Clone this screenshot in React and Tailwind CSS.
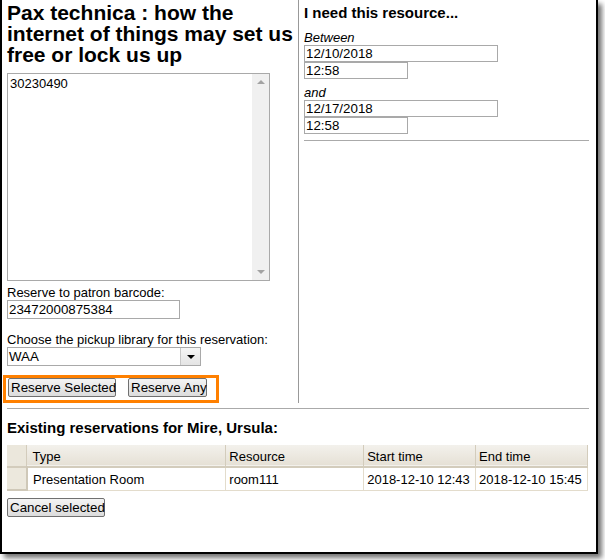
import React from "react";

const inputCls =
  "block border border-[#a9a9a9] bg-white px-[1px] text-[13.33px] leading-[15px] text-black";

const btnCls =
  "block h-[19px] whitespace-nowrap border border-[#707070] rounded-[2px] bg-gradient-to-b from-[#f4f4f4] to-[#dcdcdc] px-[2px] text-[13.33px] leading-[16px] text-black";

function Listbox() {
  return (
    <div className="mt-[8px] flex w-[263px] h-[208px] border border-[#a9a9a9] bg-white">
      <div className="flex-1 pl-[2px] pt-[2px] text-[13px] leading-[15px]">30230490</div>
      <div className="flex w-[17px] flex-col justify-between bg-[#f0f0f0] py-[6px]">
        <span className="mx-auto block h-0 w-0 border-x-[4px] border-b-[4px] border-x-transparent border-b-[#a3a3a3]" />
        <span className="mx-auto block h-0 w-0 border-x-[4px] border-t-[4px] border-x-transparent border-t-[#a3a3a3]" />
      </div>
    </div>
  );
}

function Select() {
  return (
    <div className="flex w-[194px] h-[19px] border border-[#a9a9a9] bg-white">
      <div className="flex-1 pl-[1px] text-[13.33px] leading-[17px]">WAA</div>
      <div className="flex w-[20px] items-center justify-center border-l border-[#c8c8c8] bg-gradient-to-b from-[#f6f6f6] to-[#e4e4e4]">
        <span className="block h-0 w-0 border-x-[4px] border-t-[4px] border-x-transparent border-t-black" />
      </div>
    </div>
  );
}

export default function App() {
  const rows = [
    { type: "Presentation Room", resource: "room111", start: "2018-12-10 12:43", end: "2018-12-10 15:45" },
  ];

  return (
    <div className="w-[605px] h-[560px] bg-white font-['Liberation_Sans',Arial,sans-serif] text-black">
      <div className="flex flex-col w-[598px] h-[554px] border-x-2 border-b-2 border-black bg-white shadow-[4px_4px_5px_rgba(0,0,0,0.55)]">
        <div className="flex pl-[5px] pr-[7px]">
          {/* left column */}
          <div className="w-[292px] border-r border-[#999] pt-[2px]">
            <h2 className="text-[21px] leading-[21px] font-bold">
              Pax technica : how the internet of things may set us free or lock us up
            </h2>
            <Listbox />
            <p className="mt-[4px] text-[13px] leading-[15px]">Reserve to patron barcode:</p>
            <div className={`${inputCls} w-[173px] h-[19px] leading-[17px]`}>23472000875384</div>
            <p className="mt-[13px] text-[13px] leading-[15px]">Choose the pickup library for this reservation:</p>
            <Select />
            <div className="mt-[9px] -ml-[4px] flex h-[28px] w-[216px] items-start gap-[12px] border-[3px] border-[#ff8000] pl-[2px]">
              <button className={`${btnCls} w-[108px]`}>Reserve Selected</button>
              <button className={`${btnCls} w-[79px]`}>Reserve Any</button>
            </div>
          </div>

          {/* right column */}
          <div className="flex-1 pl-[5px] pt-[4px]">
            <h3 className="text-[15px] leading-[17px] font-bold">I need this resource...</h3>
            <p className="mt-[9px] text-[13px] leading-[15px] italic">Between</p>
            <div className={`${inputCls} w-[194px] h-[17px]`}>12/10/2018</div>
            <div className={`${inputCls} w-[104px] h-[17px]`}>12:58</div>
            <p className="mt-[6px] text-[13px] leading-[15px] italic">and</p>
            <div className={`${inputCls} w-[194px] h-[17px]`}>12/17/2018</div>
            <div className={`${inputCls} w-[104px] h-[17px]`}>12:58</div>
            <div className="mt-[6px] border-t border-[#aaa]" />
          </div>
        </div>

        <div className="px-[5px] pr-[7px]">
          <div className="mt-[5px] border-t border-[#aaa]" />
          <h3 className="mt-[10px] text-[15px] leading-[17px] font-bold">
            Existing reservations for Mire, Ursula:
          </h3>
          <table className="mt-[9px] w-[581px] border-collapse text-[13px] leading-[15px]">
            <thead>
              <tr className="h-[22px] bg-gradient-to-b from-[#f3f1ec] to-[#e6e1d6] border-b-2 border-[#d3ccbc]">
                <th className="w-[20px] bg-[#ebe7dc] border-r border-[#d3ccbc]" />
                <th className="w-[199px] border-r border-[#d3ccbc] pl-[5px] pt-[2px] text-left font-normal">Type</th>
                <th className="w-[138px] border-r border-[#d3ccbc] pl-[3px] pt-[2px] text-left font-normal">Resource</th>
                <th className="w-[112px] border-r border-[#d3ccbc] pl-[3px] pt-[2px] text-left font-normal">Start time</th>
                <th className="w-[112px] border-r border-[#d3ccbc] pl-[3px] pt-[2px] text-left font-normal">End time</th>
              </tr>
            </thead>
            <tbody>
              {rows.map((r) => (
                <tr key={r.resource} className="h-[23px]">
                  <td className="bg-[#ece8dd] border-r-2 border-b-2 border-[#cfc8b8]" />
                  <td className="border-r border-b border-[#e3dccc] pl-[5px] pt-[2px]">{r.type}</td>
                  <td className="border-r border-b border-[#e3dccc] pl-[3px] pt-[2px]">{r.resource}</td>
                  <td className="border-r border-b border-[#e3dccc] pl-[3px] pt-[2px]">{r.start}</td>
                  <td className="border-r border-b border-[#e3dccc] pl-[3px] pt-[2px]">{r.end}</td>
                </tr>
              ))}
            </tbody>
          </table>
          <button className={`${btnCls} mt-[7px] w-[98px]`}>Cancel selected</button>
        </div>
      </div>
    </div>
  );
}
